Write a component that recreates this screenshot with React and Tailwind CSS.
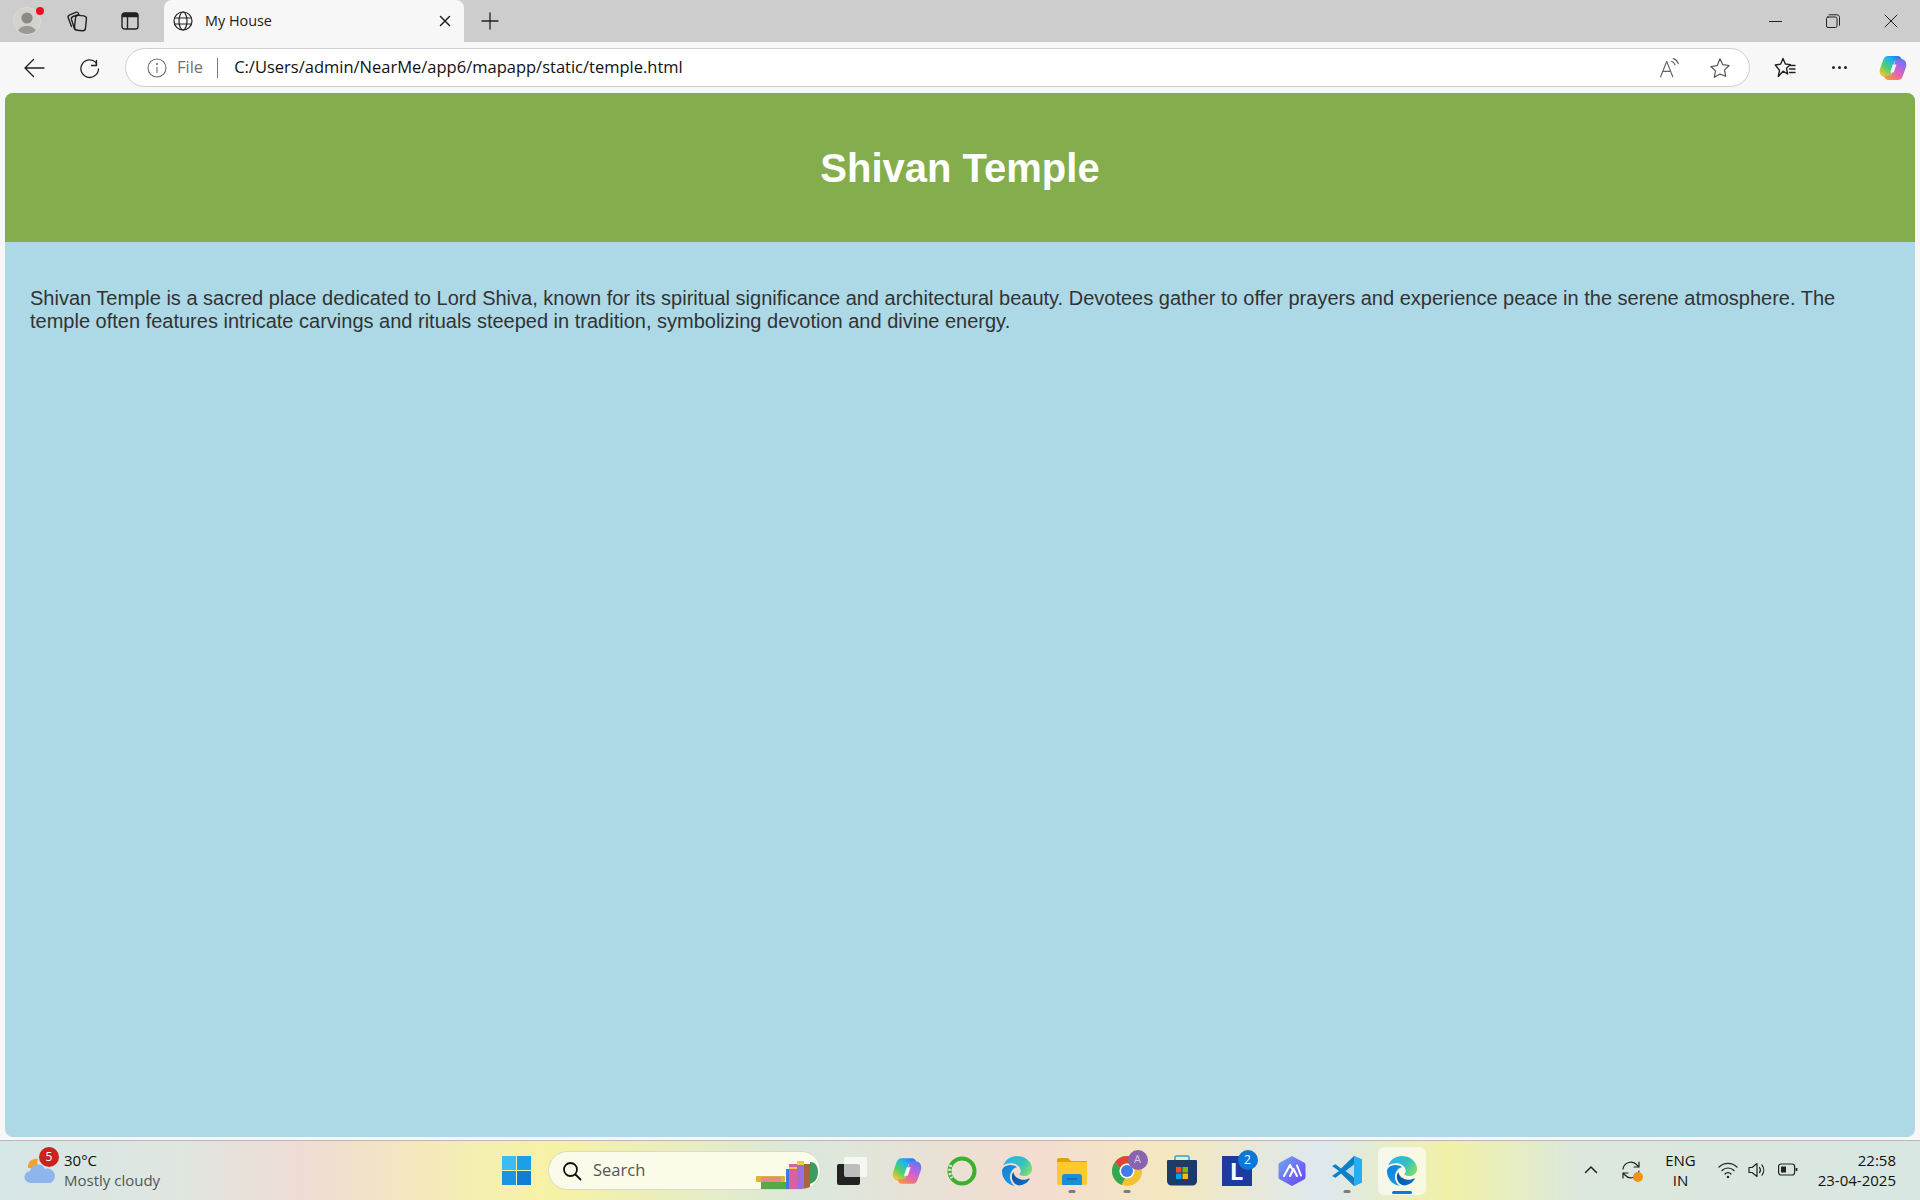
import React from 'react';

const ui = { fontFamily: '"Open Sans", "Noto Sans", sans-serif' };

const Stroke = ({ size = 20, vb = 20, children, className = '', color = '#222', sw = 1.3 }) => (
  <svg width={size} height={size} viewBox={`0 0 ${vb} ${vb}`} fill="none" stroke={color} strokeWidth={sw} strokeLinecap="round" strokeLinejoin="round" className={className}>
    {children}
  </svg>
);

const Profile = () => (
  <div className="w-[28px] h-[28px] rounded-full bg-[#d3d2cf] border border-[#dedddb] overflow-hidden">
    <svg width="28" height="28" viewBox="0 0 28 28">
      <circle cx="13" cy="10" r="5.6" fill="#8d8a86" />
      <path d="M3 28c0-7 4-10 10-10s10 3 10 10z" fill="#9c9995" />
    </svg>
  </div>
);

const CollectionsIcon = () => (
  <Stroke size={24} vb={24} sw={1.4}>
    <rect x="10" y="6.500" width="11" height="15" rx="3" transform="rotate(6 15 14)" />
    <path d="M9.500 20 6.500 10.500c-.4-1.400.2-2.500 1.500-3l6-2" />
    <path d="M6.500 17.500 3.300 9C2.800 7.600 3.400 6.300 4.700 5.800l6-2.500c1.200-.4 2.300 0 2.800 1" />
  </Stroke>
);

const TabsIcon = () => (
  <svg width="18" height="18" viewBox="0 0 18 18" fill="none" stroke="#222" strokeWidth="1.4">
    <rect x="1" y="1" width="16" height="16" rx="2.600" />
    <path d="M1.500 4.500h15V3.200L15 1.500H3L1.500 3.200z" fill="#222" />
    <path d="M6.500 4.500V17" />
  </svg>
);

const GlobeIcon = () => (
  <Stroke size={20} sw={1.2}>
    <circle cx="10" cy="10" r="9" />
    <ellipse cx="10" cy="10" rx="4" ry="9" />
    <path d="M1.600 7h16.800M1.600 13h16.800" />
  </Stroke>
);

const CopilotIcon = ({ id, size = 28 }) => (
  <svg width={size} height={size} viewBox="0 0 28 28">
    <defs>
      <linearGradient id={`${id}L`} x1="0.1" y1="0.9" x2="0.8" y2="0">
        <stop offset="0" stopColor="#f2c53a" />
        <stop offset="0.35" stopColor="#4fcf6a" />
        <stop offset="0.7" stopColor="#1fb6e8" />
        <stop offset="1" stopColor="#2f74ee" />
      </linearGradient>
      <linearGradient id={`${id}R`} x1="0.8" y1="0" x2="0.2" y2="1">
        <stop offset="0" stopColor="#5a7bf0" />
        <stop offset="0.4" stopColor="#c65fe0" />
        <stop offset="0.75" stopColor="#f0708a" />
        <stop offset="1" stopColor="#f59a32" />
      </linearGradient>
    </defs>
    <path d="M9 2C5.500 2 4.500 5 3.500 8L1 15c-1.200 4 1 8 5 8h3c2 0 3-2 3.500-4L15 9c.5-2 2-3 4-3h4l-1-2c-1-1.500-2-2-4-2z" fill={`url(#${id}L)`} />
    <path d="M19 26c3.500 0 4.500-3 5.500-6L27 13c1.200-4-1-8-5-8h-3c-2 0-3 2-3.500 4L13 19c-.5 2-2 3-4 3H5l1 2c1 1.500 2 2 4 2z" fill={`url(#${id}R)`} />
    <path d="M13.800 10.500h3.600l-2.700 8h-3.600z" fill="#f6f6f6" />
  </svg>
);

const EdgeIcon = ({ id }) => (
  <svg width="30" height="30" viewBox="0 0 24 24">
    <defs>
      <linearGradient id={`${id}T`} x1="0" y1="0.2" x2="1" y2="0.7">
        <stop offset="0" stopColor="#2fb0e8" />
        <stop offset="0.6" stopColor="#36c0c0" />
        <stop offset="1" stopColor="#7fe06a" />
      </linearGradient>
      <linearGradient id={`${id}M`} x1="0" y1="0" x2="1" y2="1">
        <stop offset="0" stopColor="#0f7fd8" />
        <stop offset="1" stopColor="#1aa0e6" />
      </linearGradient>
      <linearGradient id={`${id}B`} x1="0" y1="0" x2="1" y2="0.6">
        <stop offset="0" stopColor="#0c4f9c" />
        <stop offset="1" stopColor="#0d6fc8" />
      </linearGradient>
    </defs>
    <path d="M21.860 17.860q.14 0 .25.12.1.13.1.25t-.11.33l-.32.46-.43.53-.44.5q-.21.25-.38.42l-.22.23q-.58.53-1.340 1.040-.76.51-1.600.91-.86.4-1.740.64t-1.670.24q-.9 0-1.690-.28-.8-.28-1.480-.78-.68-.5-1.220-1.170-.53-.66-.92-1.440-.38-.77-.58-1.600-.2-.83-.2-1.670 0-1 .32-1.960.33-.97.87-1.800.14.95.55 1.770.41.82 1.020 1.500.6.68 1.380 1.210.78.54 1.640.9.86.36 1.770.56.92.2 1.800.2 1.120 0 2.180-.24 1.060-.23 2.060-.72l.2-.1.2-.05z" fill={`url(#${id}B)`} />
    <path d="M6.360 16.590q0 1.100.27 2.150.27 1.060.78 2.030.51.96 1.240 1.770.74.82 1.660 1.400-1.470-.2-2.800-.74-1.330-.55-2.480-1.370-1.150-.83-2.080-1.900-.92-1.070-1.580-2.330T.36 14.940Q0 13.540 0 12.060q0-.81.32-1.490.31-.68.83-1.230.53-.55 1.200-.96.66-.4 1.350-.66.74-.27 1.500-.39.78-.12 1.550-.12.7 0 1.420.1.72.12 1.400.35.68.23 1.320.57.63.35 1.160.83-.35 0-.7.07-.33.07-.65.23v-.02q-.63.28-1.200.74-.57.46-1.050 1.040-.48.58-.87 1.260-.38.67-.65 1.390-.27.71-.42 1.440-.15.72-.15 1.380z" fill={`url(#${id}M)`} />
    <path d="M11.960.06q1.700 0 3.330.39 1.630.38 3.070 1.150 1.430.77 2.620 1.930 1.180 1.160 1.980 2.700.49.94.76 1.960.28 1 .28 2.080 0 .89-.23 1.700-.24.8-.69 1.480-.45.68-1.100 1.220-.64.53-1.450.88-.54.24-1.110.36-.58.13-1.160.13-.42 0-.97-.03-.54-.03-1.100-.12-.55-.1-1.050-.28-.5-.19-.84-.5-.12-.09-.23-.24-.1-.16-.1-.33 0-.15.16-.35.16-.2.35-.5.2-.28.36-.68.16-.4.16-.95 0-1.060-.4-1.960-.4-.91-1.060-1.640-.66-.74-1.520-1.280-.86-.55-1.790-.89-.84-.3-1.720-.44-.87-.14-1.760-.14-1.550 0-3.060.45T.94 7.550q.71-1.740 1.810-3.130 1.100-1.380 2.520-2.350Q6.680 1.100 8.370.58q1.700-.52 3.580-.52z" fill={`url(#${id}T)`} />
  </svg>
);

const FolderIcon = () => (
  <svg width="30" height="28" viewBox="0 0 30 28">
    <path d="M0 3c0-1.100.9-2 2-2h8c1 0 1.500.5 2 1l2 2h16v3H0z" fill="#e0a10b" />
    <path d="M0 5h29c.6 0 1 .4 1 1v20c0 1.100-.9 2-2 2H2c-1.100 0-2-.9-2-2z" fill="#fdc92f" />
    <path d="M5 20c0-1.700 1-3 2.500-3h15c1.500 0 2.500 1.300 2.500 3v8H5z" fill="#1a8fd8" />
    <path d="M10 22h10" stroke="#0c5f9e" strokeWidth="1.200" />
  </svg>
);

const ChromeIcon = () => (
  <svg width="30" height="30" viewBox="0 0 30 30">
    <circle cx="15" cy="15" r="15" fill="#f1c232" />
    <path d="M15 0a15 15 0 0 1 13 7.500H15a7.500 7.500 0 0 0-7 5L3.200 5.800A15 15 0 0 1 15 0z" fill="#e34133" />
    <path d="M3.200 5.800 8 12.500a7.500 7.500 0 0 0 5 9.700L9.500 29A15 15 0 0 1 3.200 5.800z" fill="#34a853" />
    <circle cx="15" cy="15" r="7.500" fill="#fff" />
    <circle cx="15" cy="15" r="6" fill="#3f7ee8" />
  </svg>
);

const StoreIcon = () => (
  <svg width="30" height="31" viewBox="0 0 30 31">
    <path d="M8 6V2.500C8 1.500 8.700 1 9.500 1h11c.8 0 1.500.5 1.500 1.500V6" fill="none" stroke="#27a8e0" strokeWidth="1.600" />
    <path d="M1 5h28a1 1 0 0 1 1 1v20c0 2.700-1.800 4.500-4.500 4.500h-21C1.800 30.500 0 28.700 0 26V6a1 1 0 0 1 1-1z" fill="#1b3c68" />
    <rect x="9" y="12" width="5.500" height="5.500" fill="#f25022" />
    <rect x="15.500" y="12" width="5.500" height="5.500" fill="#7fba00" />
    <rect x="9" y="18.500" width="5.500" height="5.500" fill="#00a4ef" />
    <rect x="15.500" y="18.500" width="5.500" height="5.500" fill="#ffb900" />
  </svg>
);

const LensIcon = () => (
  <svg width="30" height="30" viewBox="0 0 30 30">
    <defs>
      <linearGradient id="hexA" x1="0" y1="0" x2="1" y2="1">
        <stop offset="0" stopColor="#6fa8f5" />
        <stop offset="1" stopColor="#6b3ff0" />
      </linearGradient>
    </defs>
    <path d="M15 0l12 6.500c1 .5 1.500 1.400 1.500 2.500v12c0 1.100-.5 2-1.500 2.500L15 30 3 23.500c-1-.5-1.500-1.400-1.500-2.500V9c0-1.100.5-2 1.500-2.500z" fill="url(#hexA)" />
    <path d="M7 20l6-11 3 5.500M13 20l3.500-7 3.500 7M20 9.500l4 10" fill="none" stroke="#fff" strokeWidth="2" strokeLinecap="round" strokeLinejoin="round" />
  </svg>
);

const VSCodeIcon = () => (
  <svg width="30" height="30" viewBox="0 0 30 30">
    <path d="M22 0l8 3.500v23L22 30 9 17.500l-5.500 4.300L0 20l7-5-7-5 3.500-1.800L9 12.500z" fill="#0f7fc8" />
    <path d="M22 0l8 3.500v23L22 30z" fill="#27aef2" />
    <path d="M22 8.500 13.500 15l8.500 6.500z" fill="#eef2ee" fillOpacity="0.8" />
  </svg>
);

const BookShelf = () => (
  <svg width="64" height="28" viewBox="0 0 64 28">
    <rect x="0" y="15" width="29" height="6" rx="1" fill="#d9b13b" />
    <rect x="5" y="16" width="20" height="5" rx="2" fill="#e8868a" />
    <rect x="5" y="21" width="25" height="7" fill="#5aa84a" />
    <rect x="30" y="8" width="3" height="20" fill="#3f7ae0" />
    <rect x="33" y="3" width="8" height="25" fill="#d862a0" />
    <rect x="33" y="6" width="8" height="2" fill="#f0c93c" />
    <rect x="41" y="0" width="7" height="28" fill="#9a6de0" />
    <rect x="41" y="0" width="7" height="4" fill="#f0c93c" />
    <rect x="48" y="3" width="6" height="25" fill="#a8643a" />
    <path d="M54 1c6 0 8 5 8 10s-2 10-8 12z" fill="#3f9a62" />
  </svg>
);

const TaskIcon = ({ children, dot, active, badge }) => (
  <div className="relative w-[55px] h-[48px] flex items-center justify-center">
    {active && <div className="absolute inset-y-0 left-[4px] right-[3px] rounded-md bg-white/60" />}
    <div className="relative flex items-center justify-center">
      {children}
      {badge}
    </div>
    {dot && <div className="absolute bottom-[2px] left-1/2 -translate-x-1/2 w-[7px] h-[3px] rounded-full bg-[#7c7c7c]" />}
    {active && <div className="absolute bottom-[1px] left-1/2 -translate-x-1/2 w-[20px] h-[3px] rounded-full bg-[#0a78d4]" />}
  </div>
);

export default function App() {
  return (
    <div className="w-full h-screen flex flex-col bg-[#f7f7f7] overflow-hidden" style={ui}>
      {/* tab strip */}
      <div className="h-[42px] shrink-0 bg-[#cdcdcd] flex items-start text-[#222]">
        <div className="w-[54px] h-[42px] flex items-center justify-center relative">
          <Profile />
          <div className="absolute top-[7px] right-[10px] w-[8px] h-[8px] rounded-full bg-[#e8101c]" />
        </div>
        <div className="w-[46px] h-[42px] flex items-center justify-center"><CollectionsIcon /></div>
        <div className="w-[60px] h-[42px] flex items-center justify-center"><TabsIcon /></div>
        <div className="ml-[4px] w-[300px] h-[42px] bg-[#f7f7f7] rounded-t-lg flex items-center pl-[9px] pr-[12px]">
          <GlobeIcon />
          <span className="ml-[12px] text-[14.4px] flex-1">My House</span>
          <Stroke size={14} vb={14} sw={1.5}><path d="M2.500 2.500l9 9M11.500 2.500l-9 9" /></Stroke>
        </div>
        <div className="w-[52px] h-[42px] flex items-center justify-center">
          <Stroke size={20} sw={1.3}><path d="M10 2v16M2 10h16" /></Stroke>
        </div>
        <div className="flex-1" />
        <div className="w-[58px] h-[42px] flex items-center justify-center">
          <div className="w-[13px] h-px bg-[#222]" />
        </div>
        <div className="w-[58px] h-[42px] flex items-center justify-center">
          <Stroke size={14} vb={14} sw={1}><rect x="0.500" y="3" width="10.500" height="10.500" rx="1.500" /><path d="M3 .8h8c1.500 0 2.500 1 2.500 2.500v8" /></Stroke>
        </div>
        <div className="w-[58px] h-[42px] flex items-center justify-center">
          <Stroke size={14} vb={14} sw={1}><path d="M1 1l12 12M13 1 1 13" /></Stroke>
        </div>
      </div>

      {/* toolbar */}
      <div className="h-[51px] shrink-0 flex items-center bg-[#f7f7f7] text-[#111]">
        <div className="w-[68px] flex justify-center">
          <Stroke size={22} vb={22} sw={1.4}><path d="M2 11h19M10.500 2.500 2 11l8.500 8.500" /></Stroke>
        </div>
        <div className="w-[44px] flex justify-center">
          <Stroke size={22} vb={22} sw={1.3}><path d="M17.500 3.500v5h-5" /><path d="M19.500 12A8.800 8.800 0 1 1 17 5.500L17.500 8" /></Stroke>
        </div>
        <div className="ml-[13px] w-[1625px] h-[39px] bg-white rounded-full border border-[#cfcfcf] flex items-center pl-[21px]">
          <Stroke size={20} color="#6e6e6e" sw={1.1}><circle cx="10" cy="10" r="9" /><path d="M10 9v5.500" /><circle cx="10" cy="6" r=".5" fill="#6e6e6e" /></Stroke>
          <span className="ml-[10px] text-[16.5px] text-[#717171]">File</span>
          <div className="ml-[14px] w-[1px] h-[20px] bg-[#777]" />
          <span className="ml-[16px] text-[16.5px] text-[#111]">C:/Users/admin/NearMe/app6/mapapp/static/temple.html</span>
          <div className="flex-1" />
          <Stroke size={22} vb={20} color="#666" sw={1.1} className="mr-[28px]"><path d="M1.500 18 7 4l5.500 14M3.500 13h7" /><path d="M11.500 4c1.500.5 2.500 1.500 3 3M13 1.500c2.300.7 3.800 2.200 4.500 4.500" /></Stroke>
          <Stroke size={22} vb={22} color="#555" sw={1.2} className="mr-[18px]"><path d="M11 1.800l2.800 5.900 6.400.8-4.700 4.400 1.200 6.400L11 17.100l-5.700 3.200 1.200-6.400L1.800 9.500l6.400-.8z" /></Stroke>
        </div>
        <div className="w-[50px] ml-[10px] flex justify-center">
          <Stroke size={24} vb={24} sw={1.4}><path d="M10 2.500l2.400 5.500 5 .6-3.900 3.700 1.100 5.700-4.600-2.800L5.300 20.500l1.200-6.200L2.300 9l5.400-.9z" /><path d="M17 9.500h5M16.500 13H22M16.500 16.500H22" /></Stroke>
        </div>
        <div className="w-[58px] flex justify-center items-center gap-[3px]">
          <div className="w-[3px] h-[3px] rounded-full bg-[#222]" />
          <div className="w-[3px] h-[3px] rounded-full bg-[#222]" />
          <div className="w-[3px] h-[3px] rounded-full bg-[#222]" />
        </div>
        <div className="w-[50px] flex justify-center"><CopilotIcon id="cpTop" /></div>
      </div>

      {/* page */}
      <div className="flex-1 min-h-0 px-[5px] pb-[3px] border-b border-[#b9b9b9]">
        <div className="h-full rounded-lg overflow-hidden bg-[#add8e6]" style={{ fontFamily: '"Liberation Sans", Arial, sans-serif' }}>
          <header className="h-[149px] bg-[#84ad4d] flex items-center justify-center">
            <h1 className="text-[40px] font-bold text-white">Shivan Temple</h1>
          </header>
          <p className="pt-[45px] px-[25px] text-[20px] leading-[23px] text-[#333]">
            Shivan Temple is a sacred place dedicated to Lord Shiva, known for its spiritual significance and architectural beauty. Devotees gather to offer prayers and experience peace in the serene atmosphere. The temple often features intricate carvings and rituals steeped in tradition, symbolizing devotion and divine energy.
          </p>
        </div>
      </div>

      {/* taskbar */}
      <div className="h-[59px] shrink-0 flex items-center bg-[linear-gradient(90deg,#d5e6e6_0%,#dfe6e0_9%,#efdcd4_16%,#f5efb0_25%,#f6f2a4_29%,#dbe8dc_42%,#f4dcd0_54%,#f3e8bf_61%,#dde8ef_69%,#f1f1a6_75.5%,#dce8dc_82%,#d8e6e2_100%)]">
        <div className="w-[502px] flex items-center pl-[24px] relative -mt-[2px]">
          <svg width="32" height="32" viewBox="0 0 32 32">
            <path d="M4 14a8 8 0 0 1 10-9 7 7 0 0 0 2 9z" fill="#f3a32b" />
            <path d="M7 29a6 6 0 0 1-1-12 8 8 0 0 1 15-2 7 7 0 0 1 5 14z" fill="#8fb6ec" />
          </svg>
          <div className="absolute left-[39px] -top-[3px] w-[20px] h-[20px] rounded-full bg-[#c8231c] text-white text-[12px] flex items-center justify-center">5</div>
          <div className="ml-[8px] text-[15px] leading-[20px] text-[#111]">
            <div>30°C</div>
            <div className="text-[#555]">Mostly cloudy</div>
          </div>
        </div>

        <div className="flex items-center flex-1">
          <div className="w-[29px] h-[29px] grid grid-cols-2 grid-rows-2 gap-[1px]">
            <div className="bg-[#3bbcf4]" /><div className="bg-[#1d9fe8]" />
            <div className="bg-[#1b94e2]" /><div className="bg-[#0f7ed3]" />
          </div>
          <div className="ml-[17px] w-[273px] h-[39px] rounded-full bg-[#fbfbe9] border border-[#d9d9c8] flex items-center pl-[13px] relative overflow-hidden">
            <Stroke size={20} sw={1.8} color="#111"><circle cx="8.500" cy="8.500" r="6.500" /><path d="M13.500 13.500 18.500 18.500" /></Stroke>
            <span className="ml-[11px] text-[16.5px] text-[#555]">Search</span>
            <div className="absolute right-0 bottom-0 leading-[0]"><BookShelf /></div>
          </div>
          <div className="ml-[3px]">
            <TaskIcon>
              <div className="relative w-[30px] h-[28px]">
                <div className="absolute left-0 bottom-0 w-[23px] h-[21px] bg-[#222] rounded-[2px]" />
                <div className="absolute right-0 top-0 w-[23px] h-[20px] bg-white/70 rounded-[2px]" />
              </div>
            </TaskIcon>
          </div>
          <TaskIcon><CopilotIcon id="cpBar" size={30} /></TaskIcon>
          <TaskIcon>
            <svg width="30" height="30" viewBox="0 0 30 30" fill="none">
              <circle cx="15" cy="15" r="12.500" stroke="#3cb02f" strokeWidth="4" />
              <path d="M4 9a13 13 0 0 0 1 13" stroke="#dce8dc" strokeWidth="3" strokeDasharray="2 2" />
            </svg>
          </TaskIcon>
          <TaskIcon><EdgeIcon id="edOne" /></TaskIcon>
          <TaskIcon dot><FolderIcon /></TaskIcon>
          <TaskIcon dot badge={<div className="absolute -right-[6px] -top-[6px] w-[20px] h-[20px] rounded-full bg-[#8a63b0] text-[#d8c8e8] text-[11px] flex items-center justify-center">A</div>}>
            <ChromeIcon />
          </TaskIcon>
          <TaskIcon><StoreIcon /></TaskIcon>
          <TaskIcon badge={<div className="absolute -right-[6px] -top-[6px] w-[20px] h-[20px] rounded-full bg-[#0a78d4] text-white text-[12px] flex items-center justify-center">2</div>}>
            <div className="w-[30px] h-[30px] bg-[#1d3a9e] flex items-center justify-center text-white text-[24px] font-bold">L</div>
          </TaskIcon>
          <TaskIcon><LensIcon /></TaskIcon>
          <TaskIcon dot><VSCodeIcon /></TaskIcon>
          <TaskIcon active><EdgeIcon id="edTwo" /></TaskIcon>
        </div>

        <div className="flex items-center text-[#111] text-[15px] pr-[24px] -mt-[1px]">
          <Stroke size={14} vb={14} sw={1.5} className="mr-[22px]"><path d="M1.500 9.500 7 4l5.500 5.500" /></Stroke>
          <div className="relative mr-[23px]">
            <Stroke size={22} vb={22} sw={1.2}><path d="M3 10a8 8 0 0 1 14-4l2 2M19 3v5h-5" /><path d="M19 12a8 8 0 0 1-14 4l-2-2M3 19v-5h5" /></Stroke>
            <div className="absolute right-[-1px] bottom-[-1px] w-[10px] h-[10px] rounded-full bg-[#f2930d]" />
          </div>
          <div className="text-center leading-[20px] mr-[22px]"><div>ENG</div><div>IN</div></div>
          <Stroke size={20} sw={1.2} className="mr-[9px]"><path d="M1 7a13 13 0 0 1 18 0M4 10.500a8.500 8.500 0 0 1 12 0M7 14a4 4 0 0 1 6 0" /><circle cx="10" cy="17" r=".6" fill="#222" /></Stroke>
          <Stroke size={20} sw={1.2} className="mr-[11px]"><path d="M2 7.500v5h3l5 4v-13l-5 4z" /><path d="M12.500 7.500a4 4 0 0 1 0 5M15 5a8 8 0 0 1 0 10" /></Stroke>
          <svg width="20" height="14" viewBox="0 0 20 14" fill="none" stroke="#222" strokeWidth="1.200" className="mr-[20px]">
            <rect x=".6" y="1" width="16" height="11" rx="2.500" />
            <rect x="3" y="3.500" width="5" height="6" fill="#222" stroke="none" />
            <path d="M18.500 5v3" strokeWidth="1.800" />
          </svg>
          <div className="text-right leading-[20px]"><div>22:58</div><div>23-04-2025</div></div>
        </div>
      </div>
    </div>
  );
}
